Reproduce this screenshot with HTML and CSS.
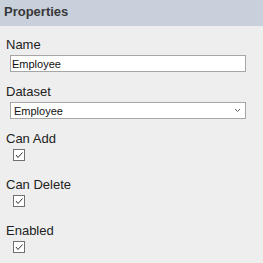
FILE: index.html
```html
<!DOCTYPE html>
<html>
<head>
	<title>Properties</title>
	<link rel="stylesheet" href="styles.css">
</head>
<body>
	<div class="panel-header">Properties</div>
	<div class="panel-body">
		<div class="field">
			<div class="field-label">Name</div>
			<input type="text" class="text-input" value="Employee">
		</div>
		<div class="field">
			<div class="field-label">Dataset</div>
			<div class="select-box">
				<span>Employee</span>
				<svg width="7" height="5" viewBox="0 0 7 5"><path d="M1 1 L3.5 3.5 L6 1" fill="none" stroke="#666" stroke-width="1"/></svg>
			</div>
		</div>
		<div class="field">
			<div class="field-label">Can Add</div>
			<div class="check-row"><span class="check-box"><svg width="10" height="10" viewBox="0 0 10 10"><path d="M2 5 L4 7.5 L8.5 2.5" fill="none" stroke="#333" stroke-width="1"/></svg></span></div>
		</div>
		<div class="field">
			<div class="field-label">Can Delete</div>
			<div class="check-row"><span class="check-box"><svg width="10" height="10" viewBox="0 0 10 10"><path d="M2 5 L4 7.5 L8.5 2.5" fill="none" stroke="#333" stroke-width="1"/></svg></span></div>
		</div>
		<div class="field">
			<div class="field-label">Enabled</div>
			<div class="check-row"><span class="check-box"><svg width="10" height="10" viewBox="0 0 10 10"><path d="M2 5 L4 7.5 L8.5 2.5" fill="none" stroke="#333" stroke-width="1"/></svg></span></div>
		</div>
	</div>
</body>
</html>
```
FILE: styles.css
```css
body{
	margin: 0;
	font-family: "Liberation Sans", Arial, sans-serif;
	background-color: #eeeeee;
	color: #222;
}
.panel-header{
	height: 22px;
	padding: 4px 0 0 4px;
	line-height: 15px;
	font-size: 13px;
	font-weight: bold;
	color: #383838;
	background-color: #c8d0dc;
}
.panel-body{
	padding: 11px 17px 0 6px;
}
.field{
	margin-bottom: 12px;
}
.field-label{
	font-size: 13px;
	line-height: 15px;
	margin-bottom: 3px;
}
.text-input{
	display: block;
	box-sizing: border-box;
	width: calc(100% - 4px);
	height: 17px;
	margin: 0 0 0 4px;
	padding: 0 0 0 1px;
	border: 1px solid #a6a6a6;
	background: white;
	font-family: "Liberation Sans", Arial, sans-serif;
	font-size: 11px;
	color: #111;
	outline: none;
}
.select-box{
	display: flex;
	align-items: center;
	justify-content: space-between;
	box-sizing: border-box;
	width: calc(100% - 4px);
	height: 17px;
	margin-left: 4px;
	padding: 0 4px 0 3px;
	border: 1px solid #a6a6a6;
	background: white;
	font-size: 11px;
	color: #111;
}
.check-row{
	height: 16px;
}
.check-box{
	display: flex;
	align-items: center;
	justify-content: center;
	box-sizing: border-box;
	width: 12px;
	height: 12px;
	margin-left: 7px;
	border: 1px solid #707070;
	background: white;
}
```
